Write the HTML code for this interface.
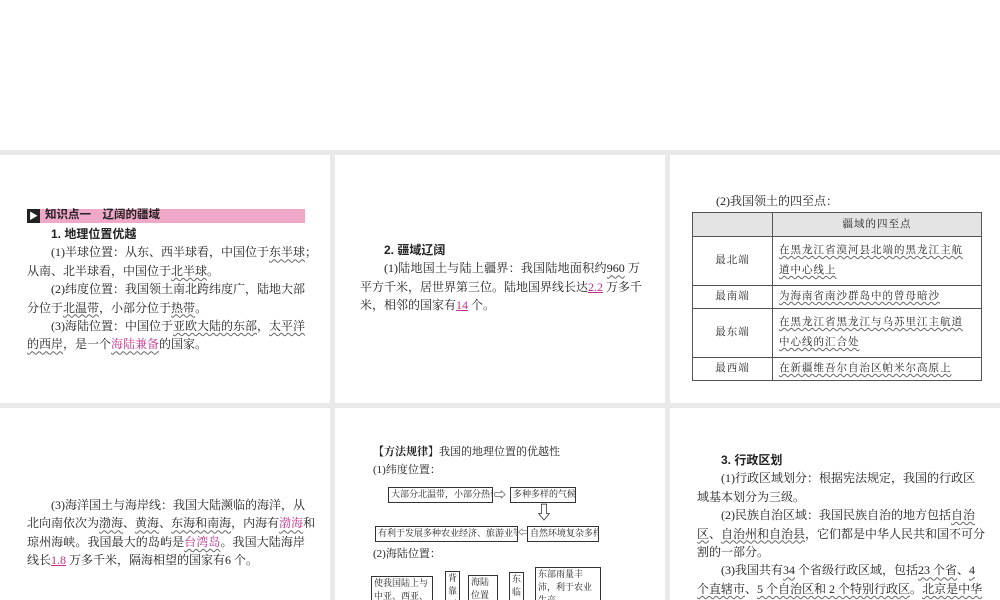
<!DOCTYPE html>
<html><head><meta charset="utf-8"><style>
*{margin:0;padding:0;box-sizing:border-box}
body{width:1000px;height:600px;background:#fff;position:relative;overflow:hidden;font-family:"Liberation Serif","Noto Serif CJK SC",serif;color:#222;font-size:12px}
.bg{position:absolute;left:0;top:150px;width:1000px;height:450px;background:#e9e9e9}
.card{position:absolute;background:#fff;overflow:hidden}
.p{position:absolute;line-height:18.4px;white-space:nowrap}
.p .l{text-align:justify;text-align-last:justify;white-space:nowrap}
.p .e{white-space:nowrap}
.b{font-family:"Liberation Sans","Noto Sans CJK SC",sans-serif;font-weight:bold}
u{text-decoration:underline wavy #666;text-decoration-thickness:1px;text-underline-offset:2px}
.m{color:#c0308a}
.s{text-decoration:underline;text-decoration-color:#c0308a;color:#c0308a}
table{border-collapse:collapse;position:absolute;font-size:10.5px;letter-spacing:1px;table-layout:fixed}
td{border:1px solid #555;padding:0 6px;line-height:20px;white-space:nowrap;overflow:hidden}
.bx{position:absolute;border:1.3px solid #333;font-size:9px;line-height:13px;padding:0 2px;background:#fff;white-space:nowrap;overflow:hidden;font-family:"Liberation Serif","Noto Serif CJK SC",serif}
</style></head><body>
<div class="bg"></div>
<div class="card" style="left:0;top:155px;width:330px;height:248px">
 <div style="position:absolute;left:27px;top:54px;width:278px;height:14px;background:#f0a8c8"></div>
 <div style="position:absolute;left:27px;top:54px;width:13px;height:14px;background:#222;color:#fff;font-size:9px;line-height:14px;text-align:center">▶</div>
 <div class="p b" style="left:45px;top:52px;font-size:11.5px;line-height:16px">知识点一　辽阔的疆域</div>
 <div class="p" style="left:27px;top:70px;width:278px">
 <div class="b" style="padding-left:24px">1. 地理位置优越</div>
 <div class="l" style="padding-left:24px">(1)半球位置：从东、西半球看，中国位于<u>东半球</u>；</div>
 <div class="e">从南、北半球看，中国位于<u>北半球</u>。</div>
 <div class="l" style="padding-left:24px">(2)纬度位置：我国领土南北跨纬度广，陆地大部</div>
 <div class="e">分位于<u>北温带</u>，小部分位于<u>热带</u>。</div>
 <div class="l" style="padding-left:24px">(3)海陆位置：中国位于<u>亚欧大陆的东部</u>，<u>太平洋</u></div>
 <div class="e"><u>的西岸</u>，是一个<u class="m">海陆兼备</u>的国家。</div>
 </div>
</div>
<div class="card" style="left:335px;top:155px;width:330px;height:248px">
 <div class="p" style="left:25px;top:86px;width:280px">
 <div class="b" style="padding-left:24px">2. 疆域辽阔</div>
 <div class="l" style="padding-left:24px">(1)陆地国土与陆上疆界：我国陆地面积约<u>960</u> 万</div>
 <div class="l">平方千米，居世界第三位。陆地国界线长达<span class="s">2.2</span> 万多千</div>
 <div class="e">米，相邻的国家有<span class="s">14</span> 个。</div>
 </div>
</div>
<div class="card" style="left:670px;top:155px;width:330px;height:248px">
 <div class="p" style="left:46px;top:37px">(2)我国领土的四至点：</div>
 <table style="left:22px;top:57px;width:289px">
 <colgroup><col style="width:80px"><col style="width:209px"></colgroup>
 <tr style="background:#e4e4e4"><td style="height:24px"></td><td style="text-align:center">疆域的四至点</td></tr>
 <tr><td style="text-align:center;height:49px">最北端</td><td><u>在黑龙江省漠河县北端的黑龙江主航</u><br><u>道中心线上</u></td></tr>
 <tr><td style="text-align:center;height:23px">最南端</td><td><u>为海南省南沙群岛中的曾母暗沙</u></td></tr>
 <tr><td style="text-align:center;height:49px">最东端</td><td><u>在黑龙江省黑龙江与乌苏里江主航道</u><br><u>中心线的汇合处</u></td></tr>
 <tr><td style="text-align:center;height:23px">最西端</td><td><u>在新疆维吾尔自治区帕米尔高原上</u></td></tr>
 </table>
</div>
<div class="card" style="left:0;top:408px;width:330px;height:192px">
 <div class="p" style="left:27px;top:88px;width:278px">
 <div class="l" style="padding-left:24px">(3)海洋国土与海岸线：我国大陆濒临的海洋，从</div>
 <div class="l">北向南依次为<u>渤海</u>、<u>黄海</u>、<u>东海和南海</u>，内海有<u class="m">渤海</u>和</div>
 <div class="l">琼州海峡。我国最大的岛屿是<u class="m">台湾岛</u>。我国大陆海岸</div>
 <div class="e">线长<span class="s">1.8</span> 万多千米，隔海相望的国家有6 个。</div>
 </div>
</div>
<div class="card" style="left:335px;top:408px;width:330px;height:192px">
 <div class="p" style="left:38px;top:37px;font-size:11px;line-height:14px"><b>【方法规律】</b>我国的地理位置的优越性</div>
 <div class="p" style="left:38px;top:55px;font-size:11px;line-height:14px">(1)纬度位置：</div>
 <div class="bx" style="left:53px;top:79px;width:105px;height:16px">大部分北温带，小部分热带</div>
 <div style="position:absolute;left:159px;top:79px;font-size:12px;line-height:16px">⇨</div>
 <div class="bx" style="left:175px;top:79px;width:66px;height:16px">多种多样的气候</div>
 <div style="position:absolute;left:200px;top:93px;font-size:18px;line-height:24px">⇩</div>
 <div class="bx" style="left:40px;top:118px;width:143px;height:16px">有利于发展多种农业经济、旅游业等</div>
 <div style="position:absolute;left:183px;top:119px;font-size:10px;line-height:14px">⇦</div>
 <div class="bx" style="left:192px;top:118px;width:72px;height:16px">自然环境复杂多样</div>
 <div class="p" style="left:38px;top:139px;font-size:11px;line-height:14px">(2)海陆位置：</div>
 <div class="bx" style="left:36px;top:168px;height:40px;white-space:normal;width:62px">使我国陆上与中亚、西亚、</div>
 <div class="bx" style="left:110px;top:163px;height:40px;width:15px;white-space:normal">背靠亚</div>
 <div class="bx" style="left:133px;top:167px;height:40px;width:30px;white-space:normal">海陆位置</div>
 <div class="bx" style="left:174px;top:164px;height:40px;width:15px;white-space:normal">东临</div>
 <div class="bx" style="left:200px;top:159px;white-space:normal;width:66px">东部雨量丰沛，利于农业生产</div>
</div>
<div class="card" style="left:670px;top:408px;width:330px;height:192px">
 <div class="p" style="left:27px;top:43px;width:278px">
 <div class="b" style="padding-left:24px">3. 行政区划</div>
 <div class="l" style="padding-left:24px">(1)行政区域划分：根据宪法规定，我国的行政区</div>
 <div class="e">域基本划分为三级。</div>
 <div class="l" style="padding-left:24px">(2)民族自治区域：我国民族自治的地方包括<u>自治</u></div>
 <div class="l"><u>区</u>、<u>自治州和自治县</u>，它们都是中华人民共和国不可分</div>
 <div class="e">割的一部分。</div>
 <div class="l" style="padding-left:24px">(3)我国共有<u>34</u> 个省级行政区域，包括<u>23 个省</u>、<u>4</u></div>
 <div class="l"><u>个直辖市</u>、<u>5 个自治区和 2 个特别行政区</u>。<u>北京是中华</u></div>
 <div class="e"><u>人民共和国的首都</u>。</div>
 </div>
</div>
</body></html>
